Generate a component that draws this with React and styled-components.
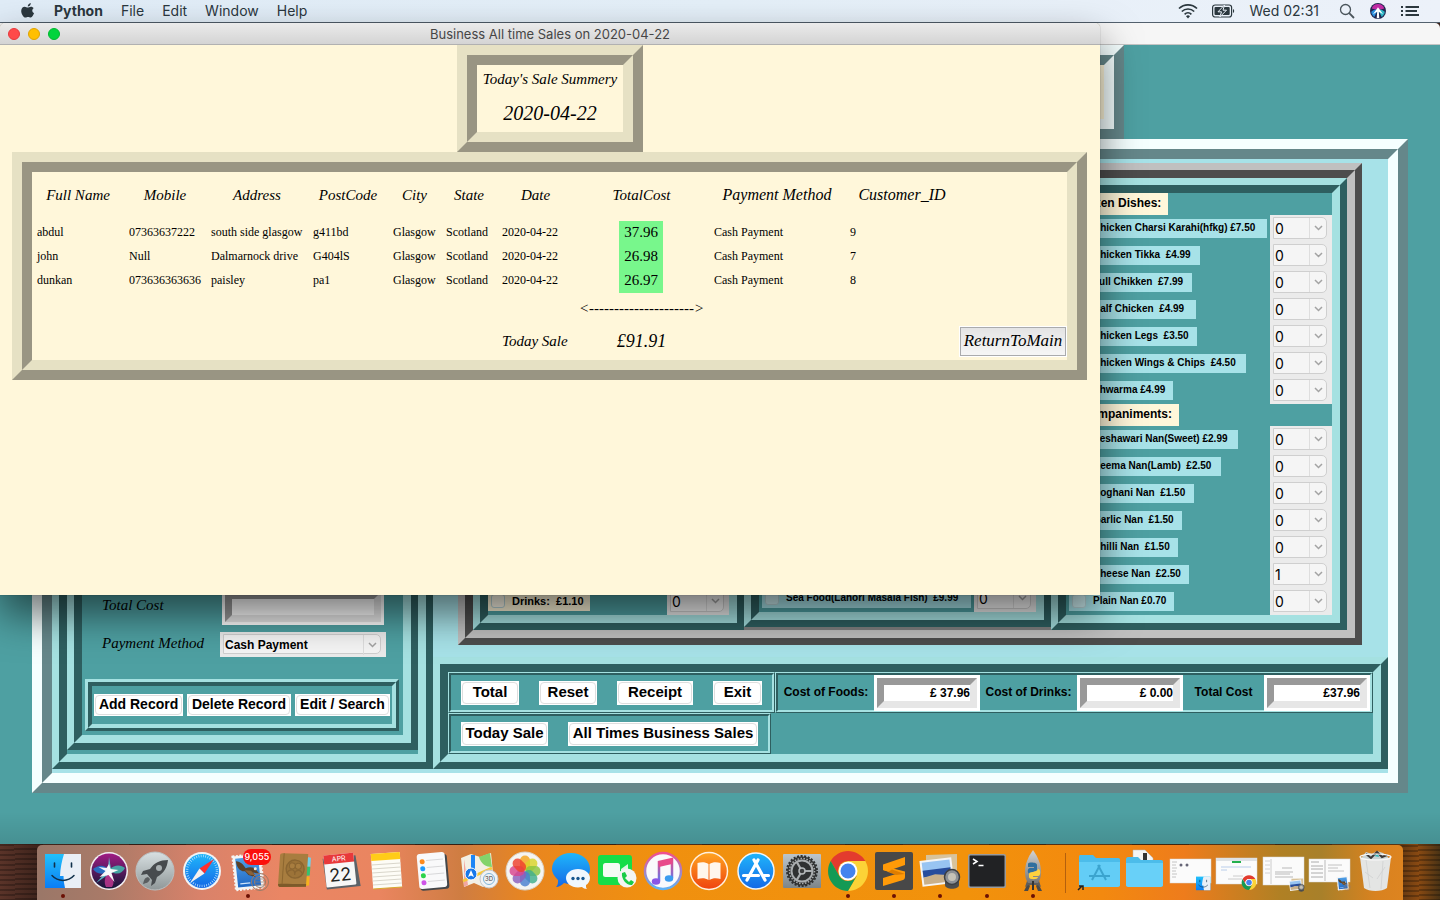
import React from "react";
import styled, { createGlobalStyle } from "styled-components";

const SANS = `"Liberation Sans", Arial, sans-serif`;
const SERIF = `"Liberation Serif", "Times New Roman", serif`;
const CHANCERY = `"Apple Chancery", "Liberation Serif", serif`;
const SYSTEM = `Inter, "Liberation Sans", sans-serif`;

const TEAL = "#4ea0a2";
const POWDER = "#a7e2e8";
const CORNSILK = "#fff7da";

const teal = { light: "#a5e1e1", dark: "#2e5f60" };
const ice = { light: "#f5ffff", dark: "#65878a" };
const grey = { light: "#c0c0c0", dark: "#4d4d4d" };
const silk = { light: "#e6e1c4", dark: "#999583" };

const GlobalStyle = createGlobalStyle`
  *, *::before, *::after { box-sizing: border-box; }
  body { margin: 0; font-family: ${SANS}; color: #000; }
  button, input, select { font: inherit; color: inherit; margin: 0; }
`;

/* ---------- shared pieces ---------- */

const RidgeOuter = styled.div`
  display: flex;
  border-style: solid;
  border-width: ${(p) => p.$outer}px;
  border-color: ${(p) => `${p.$tone.light} ${p.$tone.dark} ${p.$tone.dark} ${p.$tone.light}`};
`;

const RidgeInner = styled.div`
  flex: 1;
  min-width: 0;
  display: flex;
  flex-direction: ${(p) => p.$direction};
  border-style: solid;
  border-width: ${(p) => p.$inner}px;
  border-color: ${(p) => `${p.$tone.dark} ${p.$tone.light} ${p.$tone.light} ${p.$tone.dark}`};
  background: ${(p) => p.$fill};
`;

function Ridge({ className, outer, inner, tone, fill, direction = "column", children }) {
  return (
    <RidgeOuter className={className} $outer={outer} $tone={tone}>
      <RidgeInner $inner={inner} $tone={tone} $fill={fill} $direction={direction}>
        {children}
      </RidgeInner>
    </RidgeOuter>
  );
}

/* ---------- menu bar ---------- */

const Desktop = styled.div`
  position: relative;
  min-height: 100vh;
  display: flex;
  flex-direction: column;
  background: #3b221b;
`;

const MenuBar = styled.header`
  height: 22px;
  display: flex;
  justify-content: space-between;
  align-items: center;
  padding: 0 20px;
  background: linear-gradient(90deg, #e0ecf7, #e4eff8 50%, #ecf1f9);
  font: 14px/22px ${SYSTEM};
  color: #2b373e;
`;

const MenuList = styled.nav`
  display: flex;
  align-items: center;
  gap: 18px;
`;

const MenuItem = styled.a`
  color: inherit;
  text-decoration: none;
  font-weight: ${(p) => (p.$app ? 700 : 400)};
`;

const StatusList = styled.div`
  display: flex;
  align-items: center;
  gap: 14px;
  svg { display: block; }
`;

const StatusTools = styled.div`
  display: flex;
  align-items: center;
  gap: 15px;
  padding-left: 6px;
`;

/* ---------- back window ---------- */

const BackWindow = styled.main`
  flex: 1;
  display: flex;
  flex-direction: column;
  border-top: 1px solid #53616e;
`;

const BackTitle = styled.div`
  height: 22px;
  background: #f6f6f6;
  border-bottom: 1px solid #c4c4c4;
  border-radius: 0 5px 0 0;
`;

const BackBody = styled.div`
  flex: 1;
  display: flex;
  flex-direction: column;
  align-items: center;
  padding: 0 32px 51px;
  background: linear-gradient(0deg, rgba(0, 0, 0, 0.1), transparent 32px) ${TEAL};
`;

const Banner = styled(Ridge)`
  width: 808px;
  height: 94px;
`;

const MainFrame = styled(Ridge)`
  align-self: stretch;
`;

const CustomerPanel = styled(Ridge)`
  width: 381px;
  flex: none;
  margin-bottom: 4px;
`;

const CustomerForm = styled(Ridge)`
  flex: 1;
  margin-bottom: 4px;
`;

const FormBody = styled.div`
  flex: 1;
  display: flex;
  flex-direction: column;
  justify-content: flex-end;
  padding: 0 4px 4px 3px;
`;

const FieldRow = styled.div`
  display: grid;
  grid-template-columns: 118px 166px;
  align-items: center;
  padding-left: 17px;
  margin-bottom: ${(p) => p.$after}px;
`;

const ScriptLabel = styled.label`
  padding-bottom: 4px;
  font: italic 15px/20px ${CHANCERY};
`;

const Entry = styled.input`
  display: block;
  width: 100%;
  height: 30px;
  padding: 0;
  border: 7px solid;
  border-color: #999 #e6e6e6 #e6e6e6 #999;
  border-radius: 0;
  background: #fff;
  font: 700 12px/16px ${SANS};
  text-align: right;
`;

const EntryEdge = styled.span`
  display: flex;
  padding: 3px;
  width: ${(p) => p.$w}px;
  height: 36px;
  justify-self: center;
  background: #fff;
`;

const RecordBar = styled(Ridge)``;

const RecordButtons = styled.div`
  display: flex;
  gap: 4px;
  padding: 8px 2px;
`;

const ButtonBox = styled.button`
  flex: ${(p) => (p.$grow ? `${p.$grow} 1 0` : "none")};
  width: ${(p) => (p.$w ? `${p.$w}px` : "auto")};
  height: ${(p) => (p.$small ? 22 : 24)}px;
  padding: 1px;
  border: 0;
  background: #fff;
  display: flex;
  font: 700 ${(p) => (p.$small ? 14 : 15)}px/16px ${SANS};
  white-space: nowrap;
`;

const ButtonFace = styled.span`
  flex: 1;
  min-width: 0;
  align-self: stretch;
  display: flex;
  align-items: center;
  justify-content: center;
  padding-bottom: 2px;
  border: 1px solid #dedede;
  border-radius: 4px;
`;

function TkButton({ children, ...rest }) {
  return (
    <ButtonBox type="button" {...rest}>
      <ButtonFace>{children}</ButtonFace>
    </ButtonBox>
  );
}

const OrderSide = styled.div`
  flex: 1;
  min-width: 0;
  display: flex;
  flex-direction: column;
`;

const ProductFrame = styled(Ridge)`
  margin: 4px 26px 12px 25px;
`;

const ProductColumn = styled(Ridge)`
  flex: ${(p) => (p.$w ? "none" : 1)};
  width: ${(p) => (p.$w ? `${p.$w}px` : "auto")};
  margin-bottom: ${(p) => (p.$lift ? 3 : 0)}px;
`;

const ProductStack = styled.div`
  flex: 1;
  display: flex;
  flex-direction: column;
  justify-content: flex-end;
`;

const GroupTitle = styled.h2`
  align-self: flex-start;
  margin: 0;
  height: 22px;
  width: ${(p) => p.$w}px;
  padding-left: 2px;
  background: ${CORNSILK};
  font: 700 12px/21px ${SANS};
`;

const ProductRow = styled.div`
  height: 27px;
  display: flex;
  justify-content: space-between;
  align-items: center;
`;

const ProductChip = styled.label`
  height: 19px;
  width: ${(p) => p.$w}px;
  margin-left: ${(p) => (p.$drink ? 0 : 3)}px;
  padding: 0 0 2px 3px;
  display: flex;
  align-items: center;
  gap: 7px;
  background: ${(p) => (p.$drink ? CORNSILK : POWDER)};
  font: 700 ${(p) => (p.$drink ? 11 : 10)}px/14px ${SANS};
  white-space: pre;
`;

const Tick = styled.input`
  appearance: none;
  flex: none;
  width: 14px;
  height: 14px;
  border: 1px solid #b9d5d8;
  border-radius: 3px;
  background: rgba(255, 255, 255, 0.45);
`;

const ComboCell = styled.span`
  position: relative;
  width: ${(p) => (p.$wide ? 166 : 62)}px;
  height: ${(p) => (p.$wide ? 25 : 27)}px;
  padding: 2px 5px 3px 3px;
  background: #ebebeb;
  display: flex;
`;

const ComboSelect = styled.select`
  appearance: none;
  flex: 1;
  min-width: 0;
  padding: 2px 0 0 1px;
  border: 1px solid #cfcfcf;
  border-radius: 0 5px 5px 0;
  background: #f5f5f5;
  font: ${(p) => (p.$wide ? `700 12px/16px ${SANS}` : `14px/18px ${SYSTEM}`)};
`;

const ComboArrow = styled.svg`
  position: absolute;
  top: 3px;
  right: 5px;
  pointer-events: none;
`;

function Combo({ label, value, wide, id }) {
  return (
    <ComboCell $wide={wide}>
      <ComboSelect id={id} aria-label={label} defaultValue={value} $wide={wide}>
        <option value={value}>{value}</option>
      </ComboSelect>
      <ComboArrow width="18" height="20" viewBox="0 0 18 20" fill="none">
        <path d="M.5 0v20" stroke="#dedede" />
        <path d="M6 8l3.500 3.500L13 8" stroke="#a3a3a3" strokeWidth="1.500" />
      </ComboArrow>
    </ComboCell>
  );
}

function Product({ name, qty = "0", width, drink }) {
  return (
    <ProductRow>
      <ProductChip $w={width} $drink={drink}>
        <Tick type="checkbox" />
        {name}
      </ProductChip>
      <Combo label={`${name} quantity`} value={qty} />
    </ProductRow>
  );
}

const CheckoutFrame = styled(Ridge)`
  margin-bottom: 4px;
`;

const CheckoutRow = styled.div`
  display: flex;
  height: 41px;
`;

const ActionFrame = styled(Ridge)`
  width: ${(p) => p.$w}px;
`;

const ActionButtons = styled.div`
  flex: 1;
  display: flex;
  align-items: center;
  gap: 20px;
  padding-left: 10px;
`;

const TotalsFrame = styled(Ridge)`
  flex: 1;
`;

const TotalsRow = styled.div`
  flex: 1;
  display: grid;
  grid-template-columns: 96px 106px 97px 106px 81px 106px;
  justify-content: space-between;
`;

const TotalLabel = styled.label`
  text-align: center;
  font: 700 12px/34px ${SANS};
  white-space: nowrap;
`;

const chicken = [
  ["Chicken Charsi Karahi(hfkg) £7.50", 198],
  ["Chicken Tikka  £4.99", 131],
  ["Full Chikken  £7.99", 123],
  ["Half Chicken  £4.99", 127],
  ["Chicken Legs  £3.50", 128],
  ["Chicken Wings & Chips  £4.50", 177],
  ["Shwarma £4.99", 104],
];

const sides = [
  ["Peshawari Nan(Sweet) £2.99", 169],
  ["Keema Nan(Lamb)  £2.50", 152],
  ["Roghani Nan  £1.50", 125],
  ["Garlic Nan  £1.50", 113],
  ["Chilli Nan  £1.50", 109],
  ["Cheese Nan  £2.50", 120, "1"],
  ["Plain Nan £0.70", 105],
];

const totals = [
  ["Cost of Foods:", "£ 37.96"],
  ["Cost of Drinks:", "£ 0.00"],
  ["Total Cost", "£37.96"],
];

function Register() {
  const thick = { outer: 7, inner: 8 };
  const thin = { outer: 1, inner: 2, tone: teal, fill: TEAL };
  return (
    <BackWindow>
      <BackTitle />
      <BackBody>
        <Banner outer={10} inner={10} tone={ice} fill={CORNSILK} />
        <MainFrame outer={10} inner={10} tone={ice} fill={POWDER} direction="row">
          <CustomerPanel {...thick} tone={teal} fill={TEAL}>
            <CustomerForm {...thick} tone={teal} fill={TEAL}>
              <FormBody>
                <FieldRow $after={7}>
                  <ScriptLabel htmlFor="sum">Total Cost</ScriptLabel>
                  <EntryEdge $w={162}>
                    <Entry id="sum" type="text" />
                  </EntryEdge>
                </FieldRow>
                <FieldRow $after={22}>
                  <ScriptLabel htmlFor="method">Payment Method</ScriptLabel>
                  <Combo id="method" value="Cash Payment" wide />
                </FieldRow>
                <RecordBar outer={3} inner={4} tone={teal} fill={TEAL}>
                  <RecordButtons>
                    <TkButton $small $grow={89}>Add Record</TkButton>
                    <TkButton $small $grow={104}>Delete Record</TkButton>
                    <TkButton $small $grow={95}>Edit / Search</TkButton>
                  </RecordButtons>
                </RecordBar>
              </FormBody>
            </CustomerForm>
          </CustomerPanel>

          <OrderSide>
            <ProductFrame {...thick} tone={grey} fill="#808080" direction="row">
              <ProductColumn {...thick} $w={271} tone={teal} fill={TEAL}>
                <ProductStack>
                  <Product name="Drinks:  £1.10" width={102} drink />
                </ProductStack>
              </ProductColumn>
              <ProductColumn {...thick} $w={307} $lift tone={teal} fill={TEAL}>
                <ProductStack>
                  <Product name="Sea Food(Lahori Masala Fish)  £9.99" width={209} />
                </ProductStack>
              </ProductColumn>
              <ProductColumn {...thick} tone={teal} fill={TEAL}>
                <ProductStack>
                  <GroupTitle $w={102}>Chicken Dishes:</GroupTitle>
                  {chicken.map(([name, width]) => (
                    <Product key={name} name={name} width={width} />
                  ))}
                  <GroupTitle $w={113}>Accompaniments:</GroupTitle>
                  {sides.map(([name, width, qty]) => (
                    <Product key={name} name={name} width={width} qty={qty} />
                  ))}
                </ProductStack>
              </ProductColumn>
            </ProductFrame>

            <CheckoutFrame {...thick} tone={teal} fill={TEAL}>
              <CheckoutRow>
                <ActionFrame {...thin} $w={327}>
                  <ActionButtons>
                    <TkButton $w={58}>Total</TkButton>
                    <TkButton $w={58}>Reset</TkButton>
                    <TkButton $w={76}>Receipt</TkButton>
                    <TkButton $w={49}>Exit</TkButton>
                  </ActionButtons>
                </ActionFrame>
                <TotalsFrame {...thin}>
                  <TotalsRow>
                    {totals.map(([label, value]) => (
                      <React.Fragment key={label}>
                        <TotalLabel htmlFor={label}>{label}</TotalLabel>
                        <EntryEdge $w={106}>
                          <Entry id={label} type="text" defaultValue={value} />
                        </EntryEdge>
                      </React.Fragment>
                    ))}
                  </TotalsRow>
                </TotalsFrame>
              </CheckoutRow>
              <CheckoutRow>
                <ActionFrame {...thin} $w={323}>
                  <ActionButtons>
                    <TkButton $w={87}>Today Sale</TkButton>
                    <TkButton $w={190}>All Times Business Sales</TkButton>
                  </ActionButtons>
                </ActionFrame>
              </CheckoutRow>
            </CheckoutFrame>
          </OrderSide>
        </MainFrame>
      </BackBody>
    </BackWindow>
  );
}

/* ---------- front window ---------- */

const FrontWindow = styled.section`
  position: absolute;
  top: 23px;
  left: 0;
  width: 1100px;
  min-height: 572px;
  border-radius: 5px 5px 0 0;
  background: ${CORNSILK};
  box-shadow: 0 0 1px rgba(0, 0, 0, 0.6), 0 20px 40px rgba(0, 0, 0, 0.55);
  display: flex;
  flex-direction: column;
  align-items: center;
`;

const TitleBar = styled.div`
  align-self: stretch;
  height: 22px;
  display: grid;
  grid-template-columns: 60px 1fr 60px;
  align-items: center;
  padding: 0 8px;
  border-bottom: 1px solid #b1b1b1;
  border-radius: 5px 5px 0 0;
  background: linear-gradient(#ebebeb, #d4d4d4);
`;

const Lights = styled.div`
  display: flex;
  gap: 8px;
`;

const Light = styled.button`
  width: 12px;
  height: 12px;
  padding: 0;
  border: 1px solid ${(p) => p.$edge};
  border-radius: 50%;
  background: ${(p) => p.$fill};
`;

const Title = styled.h1`
  margin: 0;
  text-align: center;
  font: 400 13px/22px ${SYSTEM};
  color: #464646;
`;

const SummaryFrame = styled(Ridge)`
  width: 186px;
  height: 107px;
`;

const SummaryText = styled.p`
  margin: 0;
  text-align: center;
  font: italic ${(p) => (p.$big ? 20 : 15)}px/${(p) => (p.$big ? 38 : 29)}px ${CHANCERY};
  white-space: nowrap;
`;

const SalesFrame = styled(Ridge)`
  align-self: stretch;
  margin: 0 13px 0 12px;
`;

const SalesTable = styled.table`
  width: 100%;
  table-layout: fixed;
  border-collapse: collapse;
  font: 12px/22px ${SERIF};
`;

const HeadCell = styled.th`
  height: 49px;
  padding: 0 0 4px;
  font: italic ${(p) => (p.$large ? 16 : 15)}px/20px ${CHANCERY};
  white-space: nowrap;
`;

const Cell = styled.td`
  height: 24px;
  padding: 0 0 0 5px;
  vertical-align: top;
  white-space: nowrap;
`;

const CostCell = styled(Cell)`
  padding: 0 45px;
  text-align: center;
`;

const Cost = styled.span`
  display: block;
  width: 44px;
  padding-bottom: 2px;
  background: #78f78c;
  font-size: 15px;
`;

const FootCell = styled.td`
  height: ${(p) => (p.$total ? 38 : 29)}px;
  padding: 0;
  text-align: ${(p) => (p.$left ? "left" : "center")};
  padding-left: ${(p) => (p.$left ? 5 : 0)}px;
  font: italic ${(p) => (p.$big ? 18 : 15)}px/20px ${CHANCERY};
  white-space: nowrap;
`;

const ReturnButton = styled.button`
  display: block;
  width: 106px;
  height: 29px;
  margin: 0 auto;
  padding: 0;
  border: 1px solid #aaabad;
  background: linear-gradient(#e4e4e4, #f6f6f6);
  box-shadow: 0 0 0 1px #fff;
  font: italic 17px/24px ${CHANCERY};
`;

const columns = [
  ["Full Name", 92], ["Mobile", 82], ["Address", 102], ["PostCode", 80], ["City", 53], ["State", 56],
  ["Date", 77], ["TotalCost", 135], ["Payment Method", 136, true], ["Customer_ID", 114, true],
];

const sales = [
  ["abdul", "07363637222", "south side glasgow", "g411bd", "Glasgow", "Scotland", "2020-04-22", "37.96", "Cash Payment", "9"],
  ["john", "Null", "Dalmarnock drive", "G404lS", "Glasgow", "Scotland", "2020-04-22", "26.98", "Cash Payment", "7"],
  ["dunkan", "073636363636", "paisley", "pa1", "Glasgow", "Scotland", "2020-04-22", "26.97", "Cash Payment", "8"],
];

function SalesWindow() {
  return (
    <FrontWindow>
      <TitleBar>
        <Lights>
          <Light type="button" aria-label="Close" $fill="#ff4a4a" $edge="#e8383c" />
          <Light type="button" aria-label="Minimise" $fill="#ffbf00" $edge="#e0a300" />
          <Light type="button" aria-label="Zoom" $fill="#00d43c" $edge="#00b82e" />
        </Lights>
        <Title>Business All time Sales on 2020-04-22</Title>
      </TitleBar>
      <SummaryFrame outer={10} inner={10} tone={silk} fill={CORNSILK}>
        <SummaryText>Today's Sale Summery</SummaryText>
        <SummaryText $big>2020-04-22</SummaryText>
      </SummaryFrame>
      <SalesFrame outer={10} inner={10} tone={silk} fill={CORNSILK}>
        <SalesTable>
          <colgroup>
            {columns.map(([name, width]) => (
              <col key={name} width={width} />
            ))}
            <col />
          </colgroup>
          <thead>
            <tr>
              {columns.map(([name, , large]) => (
                <HeadCell key={name} $large={large}>{name}</HeadCell>
              ))}
              <td />
            </tr>
          </thead>
          <tbody>
            {sales.map((row) => (
              <tr key={row[0]}>
                {row.map((value, i) =>
                  i === 7 ? (
                    <CostCell key={i}><Cost>{value}</Cost></CostCell>
                  ) : (
                    <Cell key={i}>{value}</Cell>
                  )
                )}
                <td />
              </tr>
            ))}
          </tbody>
          <tfoot>
            <tr>
              <FootCell colSpan={7} />
              <FootCell>{"<" + "-".repeat(21) + ">"}</FootCell>
              <FootCell colSpan={3} />
            </tr>
            <tr>
              <FootCell colSpan={6} />
              <FootCell $total $left>Today Sale</FootCell>
              <FootCell $total $big>£91.91</FootCell>
              <FootCell colSpan={2} />
              <td><ReturnButton type="button">ReturnToMain</ReturnButton></td>
            </tr>
          </tfoot>
        </SalesTable>
      </SalesFrame>
    </FrontWindow>
  );
}

/* ---------- dock ---------- */

const DockShelf = styled.footer`
  height: 56px;
  display: flex;
  padding: 1px 37px 0;
  background:
    repeating-linear-gradient(178deg, rgba(0, 0, 0, 0.25) 0 2px, transparent 2px 5px),
    linear-gradient(90deg, #5b3429, #3f241c 37px, #5a3512 97%, #8a4a12 98.500%, #4a3315);
`;

const DockBar = styled.div`
  flex: 1;
  display: flex;
  padding: 0 4px 0 3px;
  border-radius: 5px 5px 0 0;
  background: linear-gradient(90deg, #9a7768 0, #a97a68 5%, #d9826a 12%, #ea8664 18%, #ea8560 25%, #cf7d42 31%, #e9861f 36%, #f0900f 45%, #f2920b 68%, #f3890f 78%, #ee7c1c 84%, #b08024 91%, #a8802a 94%, #d9821f 98%, #dd8420 100%);
`;

const DockGroup = styled.div`
  flex: ${(p) => p.$count} 1 0;
  display: flex;
`;

const DockDivider = styled.span`
  width: 20px;
  display: flex;
  justify-content: center;
  &::after { content: ""; width: 1px; height: 40px; margin-top: 8px; background: #b4600d; }
`;

const DockCell = styled.button`
  position: relative;
  flex: 1;
  padding: 0;
  border: 0;
  background: none;
  display: flex;
  flex-direction: column;
  align-items: center;
  gap: 3px;
`;

const Running = styled.span`
  width: 4px;
  height: 4px;
  border-radius: 50%;
  background: #6b1004;
`;

const Badge = styled.span`
  position: absolute;
  top: 4px;
  right: 0;
  width: 28px;
  height: 16px;
  border-radius: 8px;
  background: #fb0f0c;
  color: #fff;
  font: 500 9px/16px ${SYSTEM};
  text-align: center;
`;

const finder = (
  <>
    <rect x="5" y="9" width="36" height="34" fill="url(#gFinder)" />
    <path d="M24 9h17v34H25c-1-4-1.500-8-1.500-12H20c.3-8 1.800-15 4-22z" fill="#e9eff6" />
    <path d="M14.500 18v4M31.500 18v4" stroke="#10304a" strokeWidth="1.600" strokeLinecap="round" />
    <path d="M12 30.500c6 6.500 16 6.500 22 0" fill="none" stroke="#10304a" strokeWidth="1.500" strokeLinecap="round" />
  </>
);

const siri = (
  <>
    <circle cx="23" cy="26" r="19" fill="#f2eef2" />
    <circle cx="23" cy="26" r="17.500" fill="url(#gSiri)" />
    <path d="M7 24c5-4 11-5 16 1-5 5-12 5-16-1z" fill="#1c7fd8" opacity=".8" />
    <path d="M23 25c6-6 12-5 16-2-3 6-9 8-16 2z" fill="#3fc4b4" opacity=".8" />
    <path d="M23 26c-5 6-5 12-3 16h6c3-4 1-11-3-16z" fill="#d23c9a" opacity=".75" />
    <path d="M10 38l13-14 3 3zM23 12l2 12h-3z" fill="#5ee8e2" opacity=".75" />
    <path d="M23 19l1.500 5 8 1-7 3 3 9-6-7-9 2 6-6-7-4 8 1z" fill="#fff" opacity=".95" />
  </>
);

const launchpad = (
  <>
    <circle cx="23" cy="26" r="19" fill="url(#gSilver)" stroke="#b9c0c2" />
    <path d="M36 15c-8 0-14 3-18 9l-7 2-2 4 6-1 5 6-1 6 4-3 2-6c7-4 10-9 11-17z" fill="#474b4e" />
    <circle cx="27" cy="23" r="3" fill="#a9b0b2" />
    <path d="M16 32c-4 1-4 4-5 7 3-1 6-1 7-5z" fill="#5a5e60" />
  </>
);

const safari = (
  <>
    <circle cx="23" cy="26" r="19" fill="#f2f4f6" />
    <circle cx="23" cy="26" r="17" fill="url(#gSafari)" />
    <circle cx="23" cy="26" r="15" fill="none" stroke="#bfe4ff" strokeWidth="2.500" strokeDasharray=".7 1.600" />
    <path d="M35 14L25.500 28.500 20.500 23.500z" fill="#ff2f2f" />
    <path d="M11 38l9.500-14.500 5 5z" fill="#f6f0ee" />
  </>
);

const mail = (
  <>
    <g transform="rotate(-6 23 26)">
      <rect x="9" y="10" width="28" height="34" fill="#f4f4f4" stroke="#f4f4f4" strokeWidth="2" strokeDasharray="2 1.500" />
      <rect x="11.500" y="12.500" width="23" height="29" fill="url(#gStamp)" />
      <path d="M12 15c5 1 7 4 9 8 3-1 6-1 9 1l4 6-6-2 2 5-7-3-3-4c-5 0-8-5-8-11z" fill="#5b4129" />
      <path d="M20 25l4 5 6 1-4-5z" fill="#8a6238" />
      <circle cx="30.500" cy="24.500" r="1.500" fill="#f2ead8" />
      <path d="M14 38h10" stroke="#cfe4fa" strokeWidth="1.200" />
    </g>
    <circle cx="35" cy="37" r="8.500" fill="none" stroke="#9a7c68" />
    <circle cx="35" cy="37" r="5.500" fill="none" stroke="#9a7c68" />
    <path d="M30 37h10M31 34h8M31 40h8" stroke="#9a7c68" strokeWidth=".7" />
  </>
);

const contacts = (
  <g transform="rotate(4 23 26)">
    <path d="M34 11l5 .5v9l-4 .5z" fill="#6fd0e8" />
    <path d="M34 21l5-.5v9l-4 .5z" fill="#35c26e" />
    <path d="M34 31l5-.5v9l-4 .5z" fill="#f5b21e" />
    <path d="M11 9l25-1v33l-25 2c-2 0-3-1-3-2V11c0-1 1-2 3-2z" fill="#a87d3f" />
    <path d="M8 40c4-1 18-1 28-2v3l-25 2c-2 0-3-1-3-3z" fill="#7c5a2a" />
    <path d="M12 9v31" stroke="#8c6630" />
    <circle cx="24" cy="24" r="9" fill="#9c7338" stroke="#8a6531" strokeWidth="1.400" />
    <circle cx="21" cy="21" r="3" fill="#a87d3f" stroke="#8a6531" />
    <circle cx="27" cy="21" r="3" fill="#a87d3f" stroke="#8a6531" />
    <path d="M16 29c1-3 3-4 5-4s3 2 3 5M24 29c0-3 2-4 4-4s3 2 4 4" fill="none" stroke="#8a6531" strokeWidth="1.200" />
  </g>
);

const calendar = (
  <g transform="rotate(-6 23 26)">
    <path d="M7 12h33l2 31H8z" fill="#5c6268" />
    <rect x="8" y="9" width="30" height="32" rx="1" fill="#f7f7f7" />
    <path d="M8 10c0-1 0-1 1-1h28c1 0 1 0 1 1v8H8z" fill="#e8393b" />
    <text x="23" y="16" textAnchor="middle" fontFamily="Inter, sans-serif" fontSize="7" fill="#fff">APR</text>
    <text x="23" y="36" textAnchor="middle" fontFamily="Inter, sans-serif" fontSize="18" fill="#222">22</text>
  </g>
);

const notes = (
  <g transform="rotate(-4 23 26)">
    <rect x="9" y="8" width="29" height="35" fill="#fdfcf6" />
    <rect x="9" y="8" width="29" height="7" fill="#ffcc18" />
    <path d="M9 19h29M9 23h29M9 27h29M9 31h29M9 35h29M9 39h29" stroke="#d9d6cb" />
    <path d="M9 43h29" stroke="#d7a92e" />
  </g>
);

const reminders = (
  <g transform="rotate(-5 23 26)">
    <rect x="10" y="10" width="29" height="35" rx="3" fill="#44474a" />
    <rect x="9" y="8" width="28" height="35" rx="3" fill="#f9f9fa" />
    <path d="M18 15h17M18 22h17M18 29h17M18 36h17" stroke="#d8d8da" />
    <circle cx="14" cy="16" r="2.500" fill="#ff8a1c" />
    <circle cx="14" cy="23" r="2.500" fill="#1e9bff" />
    <circle cx="14" cy="30" r="2.500" fill="#2bd34a" />
    <circle cx="14" cy="37" r="2.500" fill="#cf55e8" />
  </g>
);

const maps = (
  <>
    <path d="M5 13l10-4 9 3 11-4 3 30-11 4-9-4-10 4z" fill="#f3efe4" />
    <path d="M23 12l11-4 2 14c-6 0-11-3-13-10z" fill="#83d36b" />
    <path d="M8 14l4 26-4 2z" fill="#f2a6a0" />
    <path d="M17 10v16" stroke="#1e86f5" strokeWidth="4" />
    <path d="M7 36l29-13" stroke="#f8c83c" strokeWidth="3" />
    <circle cx="15" cy="29" r="6" fill="#1a79ea" stroke="#fff" />
    <path d="M15 25l3 7-3-1.500-3 1.500z" fill="#fff" />
    <circle cx="33" cy="34" r="9" fill="#f1f2f4" stroke="#c4c8cc" />
    <circle cx="33" cy="34" r="5.500" fill="none" stroke="#7cb4d8" />
    <text x="33" y="36" textAnchor="middle" fontFamily="Inter, sans-serif" fontSize="6" fill="#444">3D</text>
  </>
);

const petals = ["#f7a51c", "#d9d42a", "#8bc53f", "#3fae8e", "#4a7fd0", "#8a5fbc", "#d8468e", "#ee3f2c"];
const photos = (
  <>
    <circle cx="23" cy="26" r="19" fill="#f5f4f2" stroke="#d8d2ca" />
    {petals.map((color, i) => (
      <rect key={color} x="18" y="10.500" width="10" height="15" rx="5" fill={color} opacity=".82" transform={`rotate(${i * 45} 23 26)`} />
    ))}
  </>
);

const messages = (
  <>
    <path d="M23 8c11 0 19 7 19 16s-8 15-18 15c-3 0-5 0-8-1-2 2-5 4-8 4 2-2 2-4 2-7-3-3-6-7-6-11C4 15 12 8 23 8z" fill="url(#gSafari)" />
    <path d="M30 24c7 0 12 4 12 9 0 3-2 6-4 7 0 2 0 3 1 4-2 0-4-1-5-2-9 2-16-3-16-9 0-5 5-9 12-9z" fill="#f0f7fd" />
    <circle cx="25" cy="33.500" r="1.700" fill="#15568f" />
    <circle cx="30" cy="33.500" r="1.700" fill="#15568f" />
    <circle cx="35" cy="33.500" r="1.700" fill="#15568f" />
  </>
);

const facetime = (
  <>
    <rect x="4" y="10" width="34" height="30" rx="3" fill="#16dd48" />
    <rect x="9" y="18" width="17" height="14" rx="2.500" fill="#f3fbf4" />
    <path d="M27 24l7-5v12l-7-5z" fill="#e1f5e5" />
    <circle cx="33" cy="33" r="9.500" fill="#f3f5f3" />
    <path d="M28 28l3-1 2 4-2 2 4 4 2-2 3 2-2 3c-5 1-11-6-10-12z" fill="#19cb47" />
  </>
);

const itunes = (
  <>
    <circle cx="23" cy="26" r="18" fill="#fafafc" stroke="url(#gTunes)" strokeWidth="2.500" />
    <path d="M19 36V17l13-3v19" fill="none" stroke="url(#gNote)" strokeWidth="2.500" />
    <path d="M19 17l13-3v5l-13 3z" fill="#e84a8b" />
    <ellipse cx="16" cy="36.500" rx="4.200" ry="3.200" fill="#8a55e8" />
    <ellipse cx="29" cy="33.500" rx="4.200" ry="3.200" fill="#3b9cf0" />
  </>
);

const books = (
  <>
    <circle cx="23" cy="26" r="18.500" fill="url(#gBooks)" stroke="#fff0e0" strokeWidth="1.500" />
    <path d="M22.500 19c-3-2-7-2-11-1v16c4-1 8-1 11 1zM23.500 19c3-2 7-2 11-1v16c-4-1-8-1-11 1z" fill="#fff6ec" />
  </>
);

const appStore = (
  <>
    <circle cx="23" cy="26" r="18" fill="url(#gSafari)" stroke="#eef6fc" strokeWidth="1.500" />
    <path d="M25 15L14 35M21 15l11 20M10.500 30.500h15M30 30.500h5.500" stroke="#fff" strokeWidth="3.200" strokeLinecap="round" />
  </>
);

const preferences = (
  <>
    <rect x="4" y="9" width="38" height="34" rx="1" fill="url(#gPlate)" />
    <circle cx="23" cy="26" r="14.500" fill="#2f3132" stroke="#2f3132" strokeWidth="3" strokeDasharray="2 1.500" />
    <circle cx="23" cy="26" r="10.500" fill="none" stroke="#a9adaf" strokeWidth="2" />
    <circle cx="23" cy="26" r="12.500" fill="none" stroke="#a9adaf" strokeWidth="1.500" strokeDasharray="1.500 1.500" />
    <path d="M23 26h11M23 26l-5.500-9.500M23 26l-5.500 9.500" stroke="#a9adaf" strokeWidth="2.200" />
    <circle cx="23" cy="26" r="3" fill="#3a3c3d" stroke="#b4b8ba" strokeWidth="1.500" />
  </>
);

const chromeMark = (
  <>
    <path d="M23 16h17.300A20 20 0 0 1 23 46l8.700-15z" fill="#fcd337" />
    <path d="M5.700 16A20 20 0 0 1 40.300 16H23a10 10 0 0 0-8.700 15z" fill="#e33b2e" />
    <path d="M5.700 16A20 20 0 0 0 23 46l8.700-15a10 10 0 0 1-17.400 0z" fill="#149a55" />
    <circle cx="23" cy="26" r="9.500" fill="#fff" />
    <circle cx="23" cy="26" r="7.500" fill="#4583ee" />
  </>
);

const sublime = (
  <>
    <rect x="4" y="7" width="38" height="38" rx="2" fill="#484848" />
    <path d="M12 19.500l22-7.500v8l-13 4.500L34 29v3l-22-7z" fill="#ff9a08" />
    <path d="M34 26.500v5c0 2-.5 3-2 3.500l-20 6v-8l13-4-13-4v-4z" fill="#ff9a08" />
    <path d="M21 24.500l13 4.500-9 1-8-3z" fill="#de7d00" />
  </>
);

const previewPicture = (
  <>
    <path d="M9 10l31-1v27H9z" fill="#d8c39b" />
    <g transform="rotate(-7 20 28)">
      <rect x="4" y="14" width="32" height="26" fill="#f5f5f5" />
      <rect x="6" y="16" width="28" height="9" fill="#98c4f2" />
      <rect x="6" y="24" width="28" height="7" fill="#284d9c" />
      <path d="M6 31l12-2 16 3v6H6z" fill="#c9b08a" />
    </g>
    <path d="M28 34h14v6c0 5-14 5-14 0z" fill="#4c4e50" />
    <circle cx="35" cy="32" r="7.500" fill="#8d9196" stroke="#3d3f42" strokeWidth="1.500" />
    <circle cx="35" cy="32" r="4" fill="#c6c3b8" />
  </>
);

const terminal = (
  <>
    <rect x="4" y="9" width="38" height="34" rx="2" fill="#9b9b9b" />
    <rect x="5.500" y="10.500" width="35" height="31" rx="1" fill="#212224" />
    <path d="M9 14l4 2.500-4 2.500M14.500 20.500h5" fill="none" stroke="#fff" strokeWidth="1.500" />
  </>
);

const pythonRocket = (
  <>
    <path d="M18 38l-4 8h4l2-5zM28 38l4 8h-4l-2-5z" fill="#4a4a4a" />
    <path d="M17 36l-2 6 4-2h8l4 2-2-6z" fill="#5d5d5d" />
    <path d="M23 5c5 7 8 14 8 22 0 5-1 8-3 11H18c-2-3-3-6-3-11 0-8 3-15 8-22z" fill="url(#gRocket)" />
    <path d="M18 19c0-2 9-2 9 1v5c0 2-7 1-7 4-3 0-3-6 0-6h4v-1h-6z" fill="#2f6f9f" />
    <path d="M28 24c3 0 3 7 0 7h-5v1h5c0 3-9 3-9 0v-3c0-3 8-1 9-5z" fill="#ffd23e" />
    <path d="M23 36v9" stroke="#333" strokeWidth="2" />
  </>
);

const appsFolder = (
  <>
    <path d="M3 12c0-2 1-2 2-2h12l3 3h22c2 0 2 1 2 2v26H3z" fill="#4cbcea" />
    <path d="M3 17h41v23c0 1-1 2-2 2H5c-1 0-2-1-2-2z" fill="#63cdf6" />
    <path d="M24 20l-8 15M22 20l8 15M13 31h21" stroke="#3ba4cf" strokeWidth="2" />
    <path d="M2 45l4-4M3 41h4v4" fill="none" stroke="#222" strokeWidth="1.500" />
  </>
);

const docsFolder = (
  <>
    <path d="M11 5h12l8 8v8H11z" fill="#f4f4f4" stroke="#b9b9b9" strokeWidth=".5" />
    <path d="M21 8h4v9h-4z" fill="#333" />
    <path d="M4 14c0-1 1-2 2-2h10l3 3h20c2 0 2 1 2 2v24H4z" fill="#4cbcea" />
    <path d="M4 18h37v22c0 1-1 2-2 2H6c-1 0-2-1-2-2z" fill="#68d0f8" />
  </>
);

const sheet = (top, height) => (
  <rect x="2" y={top} width="41" height={height} fill="#fbfbfb" stroke="#d8d8d8" strokeWidth=".5" />
);

const finderWindow = (
  <>
    {sheet(14, 24)}
    <path d="M4 17h5M4 20h4M4 23h5M4 26h4M4 29h5M4 32h4" stroke="#c4c4c4" />
    <circle cx="13" cy="20" r="1.500" fill="#667" />
    <circle cx="19" cy="20" r="1.500" fill="#667" />
    <g transform="translate(26 28) scale(.4)">{finder}</g>
  </>
);

const chromeWindow = (
  <>
    {sheet(13, 26)}
    <rect x="2" y="13" width="41" height="3" fill="#dfe2e5" />
    <path d="M18 17h9" stroke="#23b04d" strokeWidth="2" />
    <path d="M7 22h30M7 25h6" stroke="#b9cdea" />
    <path d="M19 31h10M14 34h14" stroke="#ccc" />
    <g transform="translate(26.500 28) scale(.37)">{chromeMark}</g>
  </>
);

const previewWindow = (
  <>
    {sheet(12, 28)}
    <path d="M4 16h5M4 20h5M4 24h5M4 28h5" stroke="#d2d2d2" />
    <path d="M10 14v25" stroke="#ccc" />
    <path d="M21 23h10M14 27h18M14 29h15M14 32h18" stroke="#aaa" strokeWidth=".8" />
    <g transform="translate(27 30) scale(.38)">{previewPicture}</g>
  </>
);

const mailWindow = (
  <>
    {sheet(14, 23)}
    <path d="M4 17h8M4 21h12M4 24h12M4 28h12M4 32h12" stroke="#9a9a9a" strokeWidth=".8" />
    <path d="M18 15v21" stroke="#bbb" />
    <path d="M21 20h14M21 23h10M21 26h16" stroke="#b5b5b5" strokeWidth=".8" />
    <g transform="translate(27 28) scale(.38)">{mail}</g>
  </>
);

const trash = (
  <>
    <path d="M9 12l4-5 6 2 5-3 6 2 5 4v4H9z" fill="#c9d2d2" />
    <path d="M13 9l5 4 6-6 5 5 5-2" stroke="#3c3735" strokeWidth="2" fill="none" />
    <path d="M21 11l4-2 1 3z" fill="#3ab5b7" />
    <path d="M7 12c6 3 24 3 31 0l-4 31c-5 4-18 4-23 0z" fill="#e4e5e4" />
    <path d="M13 15l4 28M30 16l-2 28M12 27l8 6M32 22l-8 12" stroke="#cfd1d0" strokeWidth=".8" />
    <ellipse cx="22.500" cy="12" rx="15.500" ry="3" fill="none" stroke="#f7f7f7" strokeWidth="1.200" />
  </>
);

const apps = [
  ["Finder", finder, true], ["Siri", siri], ["Launchpad", launchpad], ["Safari", safari],
  ["Mail", mail, true, "9,055"], ["Contacts", contacts], ["Calendar", calendar], ["Notes", notes],
  ["Reminders", reminders], ["Maps", maps], ["Photos", photos], ["Messages", messages],
  ["FaceTime", facetime], ["iTunes", itunes], ["Books", books], ["App Store", appStore],
  ["System Preferences", preferences], ["Chrome", chromeMark, true], ["Sublime Text", sublime, true],
  ["Preview", previewPicture, true], ["Terminal", terminal, true], ["Python", pythonRocket, true],
];

const stacks = [
  ["Applications", appsFolder], ["Documents", docsFolder], ["Finder window", finderWindow],
  ["Chrome window", chromeWindow], ["Preview window", previewWindow], ["Mail window", mailWindow],
  ["Trash", trash],
];

const gradients = [
  ["gFinder", "#22c1fb", "#0a7df5"], ["gSilver", "#d8e0e2", "#8f9798"], ["gSafari", "#1fb6fb", "#1468e6"],
  ["gStamp", "#4f9fe6", "#1f67c4"], ["gTunes", "#f0508f", "#5fb2f5"], ["gNote", "#ee4a84", "#5b7bee"],
  ["gBooks", "#ffa520", "#ef4210"], ["gPlate", "#bcc5cb", "#7d8589"], ["gRocket", "#d4d4d4", "#777"],
  ["gSiri", "#a01c84", "#151638"],
];

function DockItem({ item: [name, art, running, badge] }) {
  return (
    <DockCell type="button" aria-label={name}>
      <svg width="46" height="46" viewBox="0 0 46 46" fill="none" overflow="visible">{art}</svg>
      {running && <Running />}
      {badge && <Badge>{badge}</Badge>}
    </DockCell>
  );
}

function Dock() {
  return (
    <DockShelf>
      <DockBar>
        <DockGroup $count={22}>{apps.map((item) => <DockItem key={item[0]} item={item} />)}</DockGroup>
        <DockDivider />
        <DockGroup $count={7}>{stacks.map((item) => <DockItem key={item[0]} item={item} />)}</DockGroup>
      </DockBar>
    </DockShelf>
  );
}

const Defs = styled.svg`
  position: absolute;
  width: 0;
  height: 0;
`;

export default function App() {
  return (
    <Desktop>
      <GlobalStyle />
      <Defs aria-hidden="true">
        <defs>
          {gradients.map(([id, from, to]) => (
            <linearGradient key={id} id={id} x1="0" y1="0" x2="0" y2="1">
              <stop offset="0" stopColor={from} />
              <stop offset="1" stopColor={to} />
            </linearGradient>
          ))}
        </defs>
      </Defs>
      <MenuBar>
        <MenuList>
          <svg width="16" height="18" viewBox="0 0 16 18" fill="#2b373e">
            <path d="M10.800 1c.1 1.700-1.300 3.500-3 3.500C7.600 2.900 9.200 1.200 10.800 1zM13.600 6.200c-1.900 1.200-1.700 4 .5 4.900-.5 1.500-1.900 4.400-3.400 4.500-1 0-1.500-.6-2.600-.6s-1.700.6-2.600.6C3.400 15.600 1.200 11.700 1.200 9c0-2.700 1.700-4.200 3.500-4.200 1.200 0 2.200.8 3 .8.700 0 1.900-.9 3.300-.9 1 0 2 .5 2.600 1.500z" />
          </svg>
          <MenuItem href="#python" $app>Python</MenuItem>
          <MenuItem href="#file">File</MenuItem>
          <MenuItem href="#edit">Edit</MenuItem>
          <MenuItem href="#window">Window</MenuItem>
          <MenuItem href="#help">Help</MenuItem>
        </MenuList>
        <StatusList>
          <svg width="20" height="16" viewBox="0 0 20 16" fill="none" stroke="#2b373e" strokeWidth="1.700">
            <path d="M1 5.500a13 13 0 0 1 18 0M3.800 8.500a9 9 0 0 1 12.400 0M6.600 11.300a5 5 0 0 1 6.800 0" />
            <path d="M8 13.200a3 3 0 0 1 4 0L10 15.500z" fill="#2b373e" stroke="none" />
          </svg>
          <svg width="23" height="14" viewBox="0 0 23 14" fill="none">
            <rect x=".6" y="1" width="19" height="12" rx="2.500" stroke="#2b373e" strokeWidth="1.200" />
            <rect x="2.500" y="3" width="15.200" height="8" rx="1" fill="#2b373e" />
            <path d="M12.500 1L6 7.800h3.500L7.800 13l6.700-6.800H11z" fill="#2b373e" stroke="#eaf1f9" />
            <path d="M21 5c1.600.5 1.600 3.500 0 4z" fill="#2b373e" />
          </svg>
          <span>Wed 02:31</span>
          <StatusTools>
            <svg width="16" height="16" viewBox="0 0 16 16" fill="none" stroke="#4a545b" strokeWidth="1.300">
              <circle cx="6.500" cy="6.500" r="5" />
              <path d="M10.200 10.200L15 15" strokeWidth="1.800" />
            </svg>
            <svg width="16" height="16" viewBox="4 7 38 38">
              <circle cx="23" cy="26" r="19" fill="#20264f" />
              <path d="M8 20a16 16 0 0 1 30 0l-15 4z" fill="#c02ba4" />
              <path d="M7 28c4-5 10-7 16-5l-9 17c-4-3-7-7-7-12z" fill="#2a8fe0" />
              <path d="M39 28c-4-5-10-7-16-5l9 17c4-3 7-7 7-12z" fill="#2fb6c6" />
              <path d="M23 17l12 17-10-6 1 15h-6l1-15-10 6z" fill="#fff" />
            </svg>
            <svg width="19" height="12" viewBox="0 0 19 12" stroke="#2b373e" strokeWidth="2">
              <path d="M0 2h2M0 6h2M0 10h2M4.500 2H18M4.500 6H16M4.500 10H18" />
            </svg>
          </StatusTools>
        </StatusList>
      </MenuBar>
      <Register />
      <SalesWindow />
      <Dock />
    </Desktop>
  );
}
